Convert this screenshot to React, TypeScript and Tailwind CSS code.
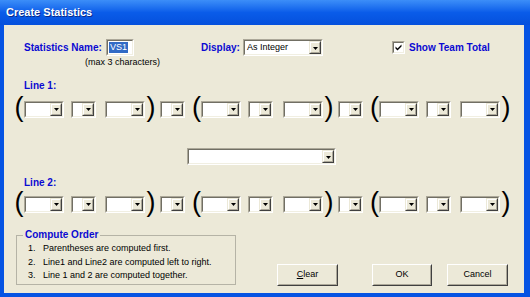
import React from 'react';

const FONT = { fontFamily: '"Liberation Sans", Arial, sans-serif' };

function Sunken({ className = '', children }: { className?: string; children?: React.ReactNode }) {
  return (
    <div className={`flex border border-t-[#ACA899] border-l-[#ACA899] border-b-white border-r-white ${className}`}>
      <div className="flex flex-1 border border-t-[#716F64] border-l-[#716F64] border-b-[#F1EFE2] border-r-[#F1EFE2] bg-white">
        {children}
      </div>
    </div>
  );
}

function Arrow() {
  return (
    <div className="flex w-[12px] border border-t-[#ECE9D8] border-l-[#ECE9D8] border-b-[#404040] border-r-[#404040]">
      <div className="flex flex-1 items-center justify-center border border-t-white border-l-white border-b-[#ACA899] border-r-[#ACA899] bg-[#ECE9D8]">
        <svg width="5" height="3" viewBox="0 0 5 3" className="mt-px">
          <path d="M0 0h5L2.5 3z" fill="#000" />
        </svg>
      </div>
    </div>
  );
}

function Combo({ className = '', text }: { className?: string; text?: string }) {
  return (
    <Sunken className={`h-[17px] shrink-0 ${className}`}>
      <div className="flex-1 overflow-hidden whitespace-nowrap pl-[2px] text-[9px] leading-[13px] text-black">{text}</div>
      <Arrow />
    </Sunken>
  );
}

function Paren({ ch, className = '' }: { ch: string; className?: string }) {
  return (
    <div className={`flex shrink-0 justify-center pb-[4px] text-[27px] leading-none text-black ${className}`}>{ch}</div>
  );
}

function ComboRow({ className = '' }: { className?: string }) {
  return (
    <div className={`flex h-[24px] items-center ${className}`}>
      <Paren ch="(" className="w-[10px]" />
      <Combo className="w-[40px]" />
      <Combo className="ml-[7px] w-[25px]" />
      <Combo className="ml-[9px] w-[40px]" />
      <Paren ch=")" className="ml-[1px] w-[10px]" />
      <Combo className="ml-[4px] w-[25px]" />
      <Paren ch="(" className="ml-[7px] w-[9px]" />
      <Combo className="w-[40px]" />
      <Combo className="ml-[7px] w-[25px]" />
      <Combo className="ml-[10px] w-[40px]" />
      <Paren ch=")" className="ml-[1px] w-[10px]" />
      <Combo className="ml-[4px] w-[25px]" />
      <Paren ch="(" className="ml-[7px] w-[9px]" />
      <Combo className="w-[40px]" />
      <Combo className="ml-[7px] w-[25px]" />
      <Combo className="ml-[9px] w-[40px]" />
      <Paren ch=")" className="ml-[1px] w-[10px]" />
    </div>
  );
}

function Button({ label, className = '' }: { label: React.ReactNode; className?: string }) {
  return (
    <div className={`flex h-[22px] border border-t-white border-l-white border-b-[#404040] border-r-[#404040] ${className}`}>
      <div className="flex flex-1 items-center justify-center border border-t-[#ECE9D8] border-l-[#ECE9D8] border-b-[#ACA899] border-r-[#ACA899] bg-[#ECE9D8] text-[9px] text-black">
        {label}
      </div>
    </div>
  );
}

export default function App() {
  const blue = 'text-[#0A0AD2]';
  return (
    <div className="flex h-[297px] w-[530px] flex-col overflow-hidden bg-[#0553E3]" style={FONT}>
      {/* Title bar */}
      <div className="flex h-[25px] shrink-0 items-center bg-gradient-to-b from-[#3C8EF8] via-[#0A5CE9] to-[#0550DC] pl-[6px]">
        <span className="text-[11px] font-bold text-white [text-shadow:1px_1px_0_#0A2A8A]">Create Statistics</span>
      </div>

      {/* Body */}
      <div className="mb-[4px] ml-[4px] mr-[6px] flex flex-1 flex-col bg-[#ECE9D8] pl-[10px] pt-[14px]">
        <div className="ml-[10px] flex h-[17px] items-center">
          <div className={`w-[82px] text-[10px] font-bold ${blue}`}>Statistics Name:</div>
          <Sunken className="h-[17px] w-[28px]">
            <div className="flex items-center pl-[1px]">
              <span className="bg-[#316AC5] px-px text-[9px] leading-[11px] text-white">VS1</span>
            </div>
          </Sunken>
          <div className={`ml-[67px] w-[42px] text-[10px] font-bold ${blue}`}>Display:</div>
          <Combo className="w-[80px]" text="As Integer" />
          <Sunken className="ml-[69px] h-[13px] w-[13px]">
            <svg width="9" height="9" viewBox="0 0 9 9">
              <path d="M1.5 3.5l2 2 4-4v2l-4 4-2-2z" fill="#000" />
            </svg>
          </Sunken>
          <div className={`ml-[4px] text-[10px] font-bold ${blue}`}>Show Team Total</div>
        </div>

        <div className="ml-[71px] mt-[1px] h-[11px] text-[9px] leading-[11px] text-black">(max 3 characters)</div>

        <div className={`ml-[10px] mt-[12px] h-[11px] text-[10px] font-bold leading-[11px] ${blue}`}>Line 1:</div>
        <ComboRow className="mt-[6px]" />

        <Combo className="ml-[173px] mt-[27px] w-[149px]" />

        <div className={`ml-[10px] mt-[12px] h-[11px] text-[10px] font-bold leading-[11px] ${blue}`}>Line 2:</div>
        <ComboRow className="mt-[4px]" />

        <div className="mt-[13px] flex h-[57px] items-end">
          <fieldset className="ml-[2px] h-[56px] w-[220px] self-start border border-[#B5B3A6]">
            <legend className={`ml-[6px] px-[2px] text-[10px] font-bold leading-[12px] ${blue}`}>Compute Order</legend>
            <ol className="pl-[11px] pt-px text-[9px] leading-[13.5px] text-black">
              <li className="flex"><span className="w-[15px]">1.</span>Parentheses are computed first.</li>
              <li className="flex"><span className="w-[15px]">2.</span>Line1 and Line2 are computed left to right.</li>
              <li className="flex"><span className="w-[15px]">3.</span>Line 1 and 2 are computed together.</li>
            </ol>
          </fieldset>
          <Button className="ml-[41px] w-[61px]" label={<span><span className="underline">C</span>lear</span>} />
          <Button className="ml-[34px] w-[60px]" label="OK" />
          <Button className="ml-[15px] w-[61px]" label="Cancel" />
        </div>
      </div>
    </div>
  );
}
